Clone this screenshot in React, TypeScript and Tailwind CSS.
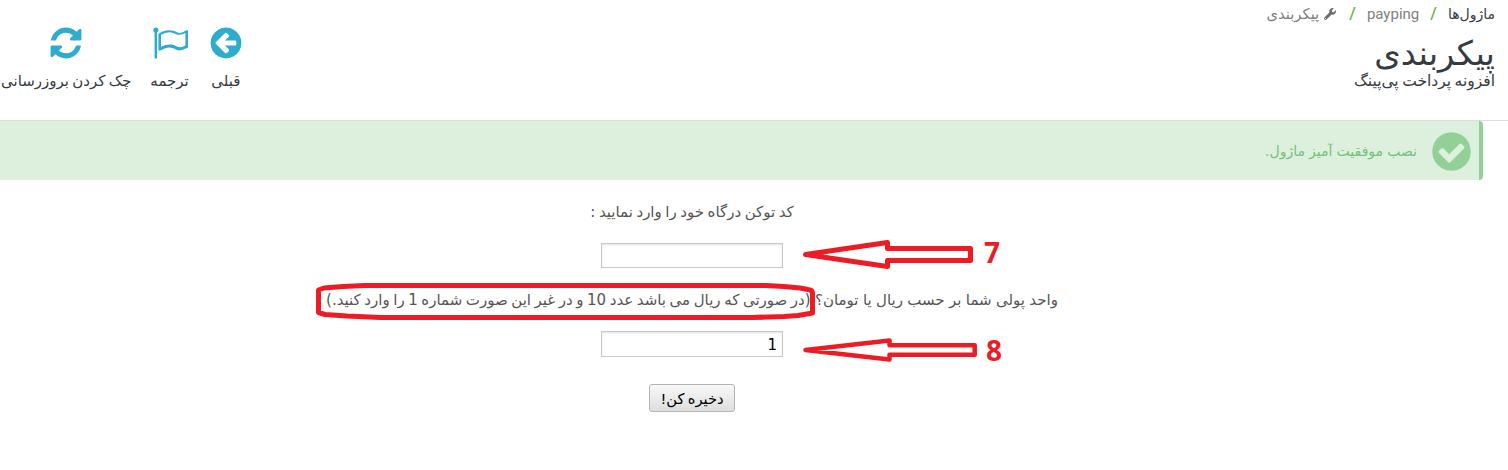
import type { ReactNode } from 'react';
import { FaWrench } from 'react-icons/fa';

const paths = {
  back: 'M1408 960v-128q0-26-19-45t-45-19h-502l189-189q19-19 19-45t-19-45l-91-91q-18-18-45-18t-45 18l-362 362-91 91q-18 18-18 45t18 45l91 91 362 362q18 18 45 18t45-18l91-91q18-18 18-45t-18-45l-189-189h502q26 0 45-19t19-45zm256-64q0 209-103 385.500t-279.500 279.500-385.500 103-385.500-103-279.500-279.500-103-385.500 103-385.500 279.500-279.500 385.500-103 385.500 103 279.500 279.500 103 385.500z',
  flag: 'M1664 1016v-616q-169 91-306 91-82 0-145-32-100-49-184-76.500t-178-27.500q-173 0-403 127v599q245-113 433-113 55 0 103.500 7.500t98 26 77 31 82.500 39.500l28 14q44 22 101 22 120 0 293-92zm-1344-760q0 35-17.500 64t-46.500 46v1266q0 14-9 23t-23 9h-64q-14 0-23-9t-9-23v-1266q-29-17-46.500-46t-17.500-64q0-53 37.500-90.500t90.500-37.500 90.500 37.500 37.500 90.500zm1472 64v763q0 39-35 57-10 5-17 9-218 116-369 116-88 0-158-35l-28-14q-64-33-99-48t-91-29-114-14q-102 0-235.500 44t-228.500 102q-15 9-33 9-16 0-32-8-32-19-32-56v-742q0-35 31-55 35-21 78.500-42.500t114-52 152.500-49.500 155-19q112 0 209 31t209 86q38 19 89 19 122 0 310-112 22-12 31-17 31-16 62 2 31 20 31 55z',
  refresh: 'M1639 1056q0 5-1 7-64 268-268 434.500t-478 166.500q-146 0-282.500-55t-243.500-157l-129 129q-19 19-45 19t-45-19-19-45v-448q0-26 19-45t45-19h448q26 0 45 19t19 45-19 45l-137 137q71 66 161 102t187 36q134 0 250-65t186-179q11-17 53-117 8-23 30-23h192q13 0 22.500 9.500t9.500 22.500zm25-800v448q0 26-19 45t-45 19h-448q-26 0-45-19t-19-45 19-45l138-138q-148-137-349-137-134 0-250 65t-186 179q-11 17-53 117-8 23-30 23h-199q-13 0-22.500-9.500t-9.500-22.500v-7q65-268 270-434.500t480-166.500q146 0 284 55.500t245 156.500l130-129q19-19 45-19t45 19 19 45z',
  check: 'M1412 734q0-28-18-46l-91-90q-19-19-45-19t-45 19l-408 407-226-226q-19-19-45-19t-45 19l-91 90q-18 18-18 46 0 27 18 45l362 362q19 19 45 19 27 0 46-19l543-543q18-18 18-45zm252 162q0 209-103 385.500t-279.500 279.500-385.500 103-385.500-103-279.500-279.500-103-385.500 103-385.500 279.500-279.500 385.500-103 385.500 103 279.500 279.500 103 385.500z',
};

function Icon({ name, className }: { name: keyof typeof paths; className: string }) {
  return (
    <svg viewBox="0 0 1792 1792" fill="currentColor" className={className}>
      <path d={paths[name]} />
    </svg>
  );
}

function Tool({ icon, children }: { icon: keyof typeof paths; children: ReactNode }) {
  return (
    <a className="flex flex-col items-center text-[15px] leading-5 whitespace-nowrap [word-spacing:-1.5px] text-[#363a41]">
      <Icon name={icon} className="size-9 text-[#2eacce]" />
      <span className="mt-[10px]">{children}</span>
    </a>
  );
}

function Annotations() {
  return (
    <div dir="ltr" className="pointer-events-none absolute inset-0 font-['Open_Sans',sans-serif] text-[28px] leading-7 font-bold text-[#ed1c24]">
      <svg viewBox="0 0 1508 470" className="absolute inset-0 size-full" fill="none" stroke="#ed1c24" strokeWidth="5" strokeLinejoin="round">
        <path d="M805.500 254.500L887.500 242.500V248.500H970.500V260.500H887.500V266.500Z" />
        <path strokeWidth="4.500" d="M805.500 350L889.500 340.500V345.300H974.700V354.700H889.500V359.500Z" />
        <path d="M318.500 290L324 288L343 286.500L365 285.500H766L784 286.500L800 288L808 289.500Q812.500 290 812.500 293V313L798 315.500L784 316.500L752 317.500H380L347 316L325 314.500L318.500 312.500Z" />
      </svg>
      <span className="absolute top-[238px] left-[984px]">7</span>
      <span className="absolute top-[336px] left-[986px]">8</span>
    </div>
  );
}

export default function App() {
  return (
    <div dir="rtl" className="relative h-[470px] w-[1508px] overflow-hidden bg-white font-['DejaVu_Sans',sans-serif]">
      <header className="flex h-[121px] justify-between border-b border-[#dddddd] pr-[13px] text-[#363a41]">
        <div>
          <nav className="flex h-7 items-center text-[14px]">
            <span>ماژول‌ها</span>
            <span className="mx-[11px] font-['Roboto',sans-serif] text-[17px] font-medium text-[#72b040]">/</span>
            <span dir="ltr" className="pt-px font-['Roboto',sans-serif] text-[15px] text-[#808080]">payping</span>
            <span className="mx-[11px] font-['Roboto',sans-serif] text-[17px] font-medium text-[#72b040]">/</span>
            <span className="mr-[2px] flex items-center gap-[5px] text-[14.800px] text-[#808080]">
              <FaWrench className="size-[12px] text-[#6c6c6c]" />
              پیکربندی
            </span>
          </nav>
          <h1 className="mt-[6px] text-[33.800px] leading-10">پیکربندی</h1>
          <h4 className="-mt-[3px] text-[15.500px] leading-5 [word-spacing:-1.4px]">افزونه پرداخت پی‌پینگ</h4>
        </div>
        <div className="flex gap-[19px] pt-[25px] pl-[1px]">
          <Tool icon="back">قبلی</Tool>
          <Tool icon="flag">ترجمه</Tool>
          <Tool icon="refresh">چک کردن بروزرسانی</Tool>
        </div>
      </header>
      <div className="mr-[25px] flex h-[59px] items-center rounded-r-[4px] border-r-4 border-[#92d097] bg-[#ddf0de] pt-[2px] pr-[5px] text-[#72c279]">
        <Icon name="check" className="size-[45px] text-[#92d097]" />
        <span className="mr-[12px] text-[14px] [word-spacing:-0.3px]">نصب موفقیت آمیز ماژول.</span>
      </div>
      <form className="mr-[124px] flex flex-col items-center text-[15px] text-[#555555]">
        <label className="mt-[22px] leading-5 [word-spacing:-1.2px]">کد توکن درگاه خود را وارد نمایید :</label>
        <input className="mt-[21px] h-[25px] w-[182px] border border-[#c8c8c8] px-1.5 text-black shadow-[inset_0_1px_2px_rgba(0,0,0,0.12)]" />
        <label className="mt-[22px] leading-5 whitespace-nowrap [word-spacing:-0.4px]">
          واحد پولی شما بر حسب ریال یا تومان؟{' '}
          <span className="[word-spacing:-1.2px]">(در صورتی که ریال می باشد عدد 10 و در غیر این صورت شماره 1 را وارد کنید.)</span>
        </label>
        <input defaultValue="1" className="mt-[21px] h-[26px] w-[182px] border border-[#c8c8c8] px-[5px] pt-px text-[15px] text-black shadow-[inset_0_1px_2px_rgba(0,0,0,0.12)]" />
        <button type="button" className="mt-[27px] h-7 w-[86px] rounded-[3px] border border-[#b4b4b4] bg-linear-to-b from-[#f8f8f8] to-[#dedede] pt-[2px] text-[14.700px] whitespace-nowrap text-black [word-spacing:-1.4px]">
          دخیره کن!
        </button>
      </form>
      <Annotations />
    </div>
  );
}
